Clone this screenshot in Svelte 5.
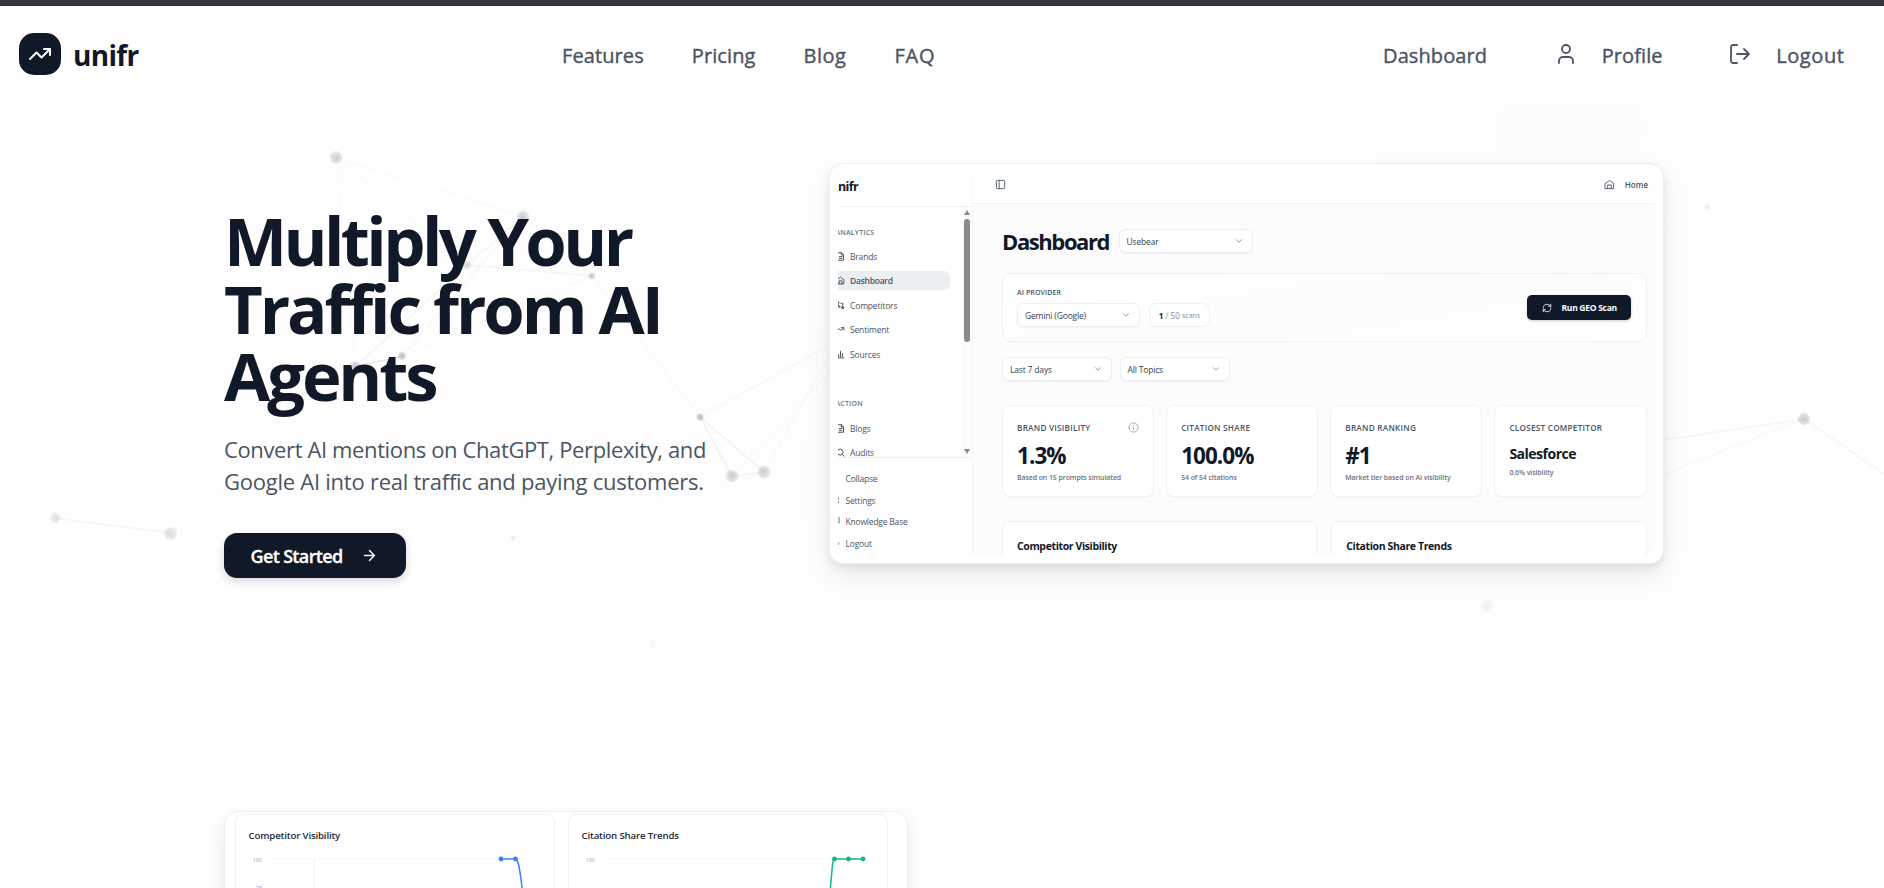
<script lang="ts">
	interface Node {
		x: number;
		y: number;
		r: number;
		o: number;
	}

	const navLinks = ['Features', 'Pricing', 'Blog', 'FAQ'];

	const nodes: Node[] = [
		{ x: 336, y: 157.5, r: 6.8, o: 0.18 },
		{ x: 523, y: 217, r: 6.8, o: 0.18 },
		{ x: 592, y: 276, r: 3.8, o: 0.2 },
		{ x: 467, y: 265, r: 5, o: 0.14 },
		{ x: 402, y: 356, r: 4.5, o: 0.22 },
		{ x: 355, y: 367, r: 6, o: 0.22 },
		{ x: 700, y: 417, r: 4, o: 0.24 },
		{ x: 732, y: 476, r: 6.8, o: 0.18 },
		{ x: 764, y: 472, r: 6.8, o: 0.18 },
		{ x: 55, y: 518, r: 5.8, o: 0.12 },
		{ x: 170.5, y: 533.5, r: 7, o: 0.13 },
		{ x: 513, y: 538, r: 3.2, o: 0.07 },
		{ x: 653, y: 644, r: 5, o: 0.025 },
		{ x: 1487, y: 606, r: 7, o: 0.06 },
		{ x: 1804, y: 419, r: 6.5, o: 0.2 },
		{ x: 1707, y: 207, r: 3.2, o: 0.08 }
	];

	// x1, y1, x2, y2, opacity
	const edges = [
		[336, 157, 523, 217, 0.016],
		[336, 157, 467, 265, 0.016],
		[336, 157, 355, 367, 0.012],
		[336, 157, 402, 356, 0.012],
		[523, 217, 467, 265, 0.03],
		[523, 217, 592, 276, 0.025],
		[467, 265, 592, 276, 0.035],
		[467, 265, 355, 367, 0.035],
		[523, 217, 402, 356, 0.025],
		[402, 356, 355, 367, 0.08],
		[592, 276, 402, 356, 0.014],
		[592, 276, 700, 417, 0.02],
		[700, 417, 732, 476, 0.045],
		[700, 417, 764, 472, 0.045],
		[732, 476, 764, 472, 0.035],
		[700, 417, 830, 345, 0.024],
		[764, 472, 832, 350, 0.016],
		[732, 476, 832, 370, 0.016],
		[55, 518, 170, 533, 0.03],
		[170, 533, 230, 640, 0.008],
		[764, 472, 513, 538, 0.01],
		[513, 538, 430, 640, 0.008],
		[513, 538, 630, 630, 0.008],
		[402, 356, 513, 538, 0.008],
		[732, 476, 660, 630, 0.008],
		[1804, 419, 1664, 440, 0.03],
		[1804, 419, 1664, 474, 0.02],
		[1804, 419, 1884, 474, 0.03],
		[1804, 419, 1707, 207, 0.007]
	];

	const analytics = [
		{ label: 'Brands', icon: 'file' },
		{ label: 'Dashboard', icon: 'home', active: true },
		{ label: 'Competitors', icon: 'compare' },
		{ label: 'Sentiment', icon: 'trend' },
		{ label: 'Sources', icon: 'bars' }
	];
	const actions = [
		{ label: 'Blogs', icon: 'file' },
		{ label: 'Audits', icon: 'search' }
	];
	const footerItems = [
		{ label: 'Collapse', icon: '' },
		{ label: 'Settings', icon: 'M1 5v4M1 14v4' },
		{ label: 'Knowledge Base', icon: 'M0 2h3v14H0' },
		{ label: 'Logout', icon: 'M0 9l3 3-3 3' }
	];

	const stats = [
		{ label: 'BRAND VISIBILITY', value: '1.3%', note: 'Based on 15 prompts simulated', info: true },
		{ label: 'CITATION SHARE', value: '100.0%', note: '54 of 54 citations' },
		{ label: 'BRAND RANKING', value: '#1', note: 'Market tier based on AI visibility' },
		{ label: 'CLOSEST COMPETITOR', value: 'Salesforce', note: '0.6% visibility', small: true }
	];

	const icons: Record<string, string> = {
		file: 'M5 2h10l5 5v15H5zM14 2v6h6M9 12h7M9 17h7',
		home: 'M3 10l9-7 9 7v11H3zM8 21v-8h8v8',
		compare: 'M6 3v12h5M8 12l3 3-3 3M2 5l4-3 3 3M13 6h5v12M15 18a3 3 0 1 0 6 0a3 3 0 1 0-6 0',
		trend: 'M2 15l6-5 5 4 8-7M14 7h7v7',
		bars: 'M3 21h18M7 18v-6M12 18V3M17 18V9',
		search: 'M3 11a8 8 0 1 0 16 0a8 8 0 1 0-16 0M17 17l5 5'
	};
</script>

{#snippet icon(d: string, cls: string)}
	<svg class="icon {cls}" viewBox="0 0 24 24" aria-hidden="true"><path {d} /></svg>
{/snippet}

{#snippet select(text: string, cls: string)}
	<div class="select {cls}">
		<span>{text}</span>
		{@render icon('M6 9l6 6 6-6', 'chevron')}
	</div>
{/snippet}

<div class="page">
	<svg class="network" viewBox="0 0 1884 888" aria-hidden="true">
		<defs>
			<radialGradient id="dot">
				<stop offset="0" stop-color="#111827" />
				<stop offset="0.65" stop-color="#111827" stop-opacity="0.75" />
				<stop offset="1" stop-color="#111827" stop-opacity="0.15" />
			</radialGradient>
		</defs>
		{#each edges as [x1, y1, x2, y2, o]}
			<line {x1} {y1} {x2} {y2} stroke="#111827" stroke-width="2" stroke-opacity={o} />
		{/each}
		{#each nodes as node}
			<circle cx={node.x} cy={node.y} r={node.r} fill="url(#dot)" opacity={node.o} />
		{/each}
	</svg>

	<div class="strip"></div>
	<header>
		<div class="brand">
			<div class="logo">{@render icon('M22 7l-8.5 8.5-5-5L2 17M16 7h6v6', 'logo-icon')}</div>
			<span>unifr</span>
		</div>
		<nav>
			{#each navLinks as link}
				<a href="#{link}">{link}</a>
			{/each}
		</nav>
		<div class="account">
			<a href="#dashboard">Dashboard</a>
			<a href="#profile" class="profile">
				{@render icon('M19 21v-2a4 4 0 0 0-4-4H9a4 4 0 0 0-4 4v2M8 7a4 4 0 1 0 8 0a4 4 0 1 0-8 0', 'nav-icon')}
				<span>Profile</span>
			</a>
			<a href="#logout" class="logout">
				{@render icon('M9 21H5a2 2 0 0 1-2-2V5a2 2 0 0 1 2-2h4M16 17l5-5-5-5M21 12H9', 'nav-icon')}
				<span>Logout</span>
			</a>
		</div>
	</header>

	<section class="hero">
		<div class="copy">
			<h1><span class="tight">Multiply Your</span><br />Traffic from AI<br />Agents</h1>
			<p>
				<span class="tight">Convert AI mentions on ChatGPT, Perplexity, and</span><br />Google AI into real traffic and paying customers.
			</p>
			<button class="cta">
				<span>Get Started</span>
				{@render icon('M5 12h14M12 5l7 7-7 7', 'arrow')}
			</button>
		</div>

		<div class="preview">
			<div class="screen">
				<aside>
					<div class="side-brand">nifr</div>
					<div class="side-scroll">
						<div class="side-nav">
							<div class="group">ANALYTICS</div>
							{#each analytics as item}
								<div class="item" class:active={item.active}>
									{@render icon(icons[item.icon], 'item-icon')}
									<span>{item.label}</span>
								</div>
							{/each}
							<div class="group second">ACTION</div>
							{#each actions as item}
								<div class="item">
									{@render icon(icons[item.icon], 'item-icon')}
									<span>{item.label}</span>
								</div>
							{/each}
						</div>
						<div class="scrollbar">
							<i class="up"></i>
							<i class="thumb"></i>
							<i class="down"></i>
						</div>
					</div>
					<div class="side-footer">
						{#each footerItems as item}
							<div class="foot-item">
								<span class="sliver">
									{#if item.icon}{@render icon(item.icon, 'foot-icon')}{/if}
								</span>
								<span>{item.label}</span>
							</div>
						{/each}
					</div>
				</aside>

				<div class="main">
					<div class="topbar">
						{@render icon('M3 5a2 2 0 0 1 2-2h14a2 2 0 0 1 2 2v14a2 2 0 0 1-2 2H5a2 2 0 0 1-2-2zM9 3v18', 'panel-icon')}
						<div class="home">
							{@render icon(icons.home, 'home-icon')}
							<span>Home</span>
						</div>
					</div>
					<div class="content">
						<div class="title-row">
							<h2>Dashboard</h2>
							{@render select('Usebear', 'brand-select')}
						</div>
						<div class="provider">
							<div>
								<div class="provider-label">AI PROVIDER</div>
								<div class="provider-row">
									{@render select('Gemini (Google)', 'provider-select')}
									<div class="scans"><b>1</b> / 50 <small>scans</small></div>
								</div>
							</div>
							<div class="run">
								{@render icon('M3 12a9 9 0 0 1 9-9 9.7 9.7 0 0 1 6.7 2.7L21 8M21 3v5h-5M21 12a9 9 0 0 1-9 9 9.7 9.7 0 0 1-6.7-2.7L3 16M8 16H3v5', 'run-icon')}
								<span>Run GEO Scan</span>
							</div>
						</div>
						<div class="filters">
							{@render select('Last 7 days', '')}
							{@render select('All Topics', '')}
						</div>
						<div class="stats">
							{#each stats as stat}
								<div class="stat">
									<div class="stat-label">
										<span>{stat.label}</span>
										{#if stat.info}{@render icon('M2 12a10 10 0 1 0 20 0a10 10 0 1 0-20 0M12 16v-4M12 8v.5', 'info')}{/if}
									</div>
									<div class="stat-value" class:small={stat.small}>{stat.value}</div>
									<div class="stat-note">{stat.note}</div>
								</div>
							{/each}
						</div>
						<div class="charts">
							<div class="chart-card">Competitor Visibility</div>
							<div class="chart-card">Citation Share Trends</div>
						</div>
					</div>
				</div>
			</div>
		</div>
	</section>

	<section class="report">
		<div class="report-card">
			<div class="report-title">Competitor Visibility</div>
			<svg class="plot" width="318" height="40" aria-hidden="true">
				<text x="16.5" y="13">100</text>
				<text x="20" y="41">75</text>
				<line x1="34" y1="10" x2="296" y2="10" class="grid dashed" />
				<line x1="78" y1="10" x2="78" y2="40" class="grid" />
				<path d="M265 10H279.5C283 10 284.5 27 286.5 42" stroke="#3b82f6" />
				<circle cx="265" cy="10" r="2.4" fill="#3b82f6" />
				<circle cx="279.5" cy="10" r="2.4" fill="#3b82f6" />
			</svg>
		</div>
		<div class="report-card">
			<div class="report-title">Citation Share Trends</div>
			<svg class="plot" width="318" height="40" aria-hidden="true">
				<text x="16.5" y="13">100</text>
				<line x1="34" y1="10" x2="296" y2="10" class="grid dashed" />
				<path d="M261 42C263 27 263 10 265.5 10H294" stroke="#10b981" />
				<circle cx="265.5" cy="10" r="2.4" fill="#10b981" />
				<circle cx="279.5" cy="10" r="2.4" fill="#10b981" />
				<circle cx="294" cy="10" r="2.4" fill="#10b981" />
			</svg>
		</div>
	</section>
</div>

<style>
	:global(body) {
		background: #fefefe;
		overflow: hidden;
	}

	.page {
		position: relative;
		width: 1884px;
		height: 888px;
		overflow: hidden;
		box-sizing: border-box;
		font-family: 'Open Sans', 'Noto Sans', sans-serif;
		color: #111827;
		background:
			radial-gradient(ellipse 240px 160px at 1570px 130px, rgba(59, 130, 246, 0.01), transparent),
			radial-gradient(ellipse 280px 200px at 940px 480px, rgba(16, 185, 129, 0.016), transparent),
			#fefefe;
	}

	.page * {
		box-sizing: border-box;
	}

	.icon {
		fill: none;
		stroke: currentColor;
		stroke-width: 2;
		stroke-linecap: round;
		stroke-linejoin: round;
		flex-shrink: 0;
		display: block;
	}

	.network {
		position: absolute;
		inset: 0;
		width: 1884px;
		height: 888px;
	}

	.strip {
		height: 6px;
		background: #39373d;
		border-bottom: 1px solid #2d2b31;
	}

	header {
		position: relative;
		display: grid;
		grid-template-columns: 543px 1fr auto;
		align-items: center;
		height: 96px;
		padding: 0 39.5px 0 19px;
		background: #fff;
	}

	.brand {
		display: flex;
		align-items: center;
		gap: 12px;
		font-size: 28px;
		font-weight: 700;
		line-height: 42px;
		letter-spacing: -0.7px;
	}

	.brand span {
		padding-top: 1px;
	}

	.logo {
		display: grid;
		place-items: center;
		width: 42px;
		height: 42px;
		border-radius: 15px;
		background: #111827;
		color: #fff;
	}

	.logo-icon {
		width: 24px;
		height: 24px;
	}

	nav,
	.account {
		display: flex;
		align-items: center;
	}

	nav {
		gap: 48px;
	}

	a {
		color: #4b5563;
		font-size: 20px;
		font-weight: 500;
		line-height: 30px;
		letter-spacing: 0.1px;
		text-decoration: none;
		padding-top: 3px;
		white-space: nowrap;
		-webkit-text-stroke: 0.4px #4b5563;
	}

	nav a:nth-child(n + 3) {
		letter-spacing: 0.5px;
	}

	nav a:last-child {
		letter-spacing: 0.8px;
	}

	.profile,
	.logout {
		display: flex;
		align-items: center;
	}

	.profile {
		margin-left: 67px;
	}

	.profile span {
		margin-left: 23.5px;
	}

	.logout {
		margin-left: 65px;
	}

	.logout span {
		margin-left: 24.5px;
		letter-spacing: 0.6px;
	}

	.nav-icon {
		width: 24px;
		height: 24px;
		margin-top: -3px;
		stroke-width: 1.8;
	}

	.hero {
		position: relative;
		display: grid;
		grid-template-columns: 605px 835px;
		padding: 61px 0 0 224px;
		height: 709px;
	}

	h1 {
		margin: 44px 0 0;
		font-size: 67px;
		line-height: 67.5px;
		font-weight: 700;
		letter-spacing: -3.1px;
		white-space: nowrap;
	}

	h1 .tight {
		letter-spacing: -3.6px;
	}

	p {
		margin: 23px 0 0;
		color: #4b5563;
		font-size: 22px;
		line-height: 32px;
		letter-spacing: -0.25px;
		white-space: nowrap;
	}

	p .tight {
		letter-spacing: -0.38px;
	}

	.cta {
		display: flex;
		align-items: center;
		gap: 18.5px;
		width: 182px;
		height: 45px;
		margin-top: 36px;
		padding: 0 0 0 26.5px;
		border: 0;
		border-radius: 13px;
		background: #111827;
		color: #fff;
		font-family: inherit;
		font-size: 18px;
		font-weight: 600;
		letter-spacing: -0.65px;
		white-space: nowrap;
		-webkit-text-stroke: 0.3px #fff;
		box-shadow: 0 4px 8px rgba(0, 0, 0, 0.14);
	}

	.cta span {
		padding-top: 2px;
	}

	.arrow {
		width: 17px;
		height: 17px;
	}

	.preview {
		height: 401px;
		padding: 8.5px 8px;
		border: 1px solid #eceef0;
		border-radius: 14px;
		background: #fff;
		box-shadow:
			0 14px 30px rgba(0, 0, 0, 0.07),
			0 4px 8px rgba(0, 0, 0, 0.08);
	}

	.screen {
		display: grid;
		grid-template-columns: 134.5px 1fr;
		height: 382px;
		overflow: hidden;
		border-radius: 0 0 8px 0;
	}

	aside {
		display: flex;
		flex-direction: column;
		overflow: hidden;
		border-right: 1px solid #f4f5f6;
		color: #4b5563;
		font-size: 8.5px;
		white-space: nowrap;
	}

	.side-brand {
		height: 34.5px;
		border-bottom: 1px solid #f1f2f4;
		color: #111827;
		font-size: 12.5px;
		font-weight: 700;
		line-height: 28px;
		letter-spacing: -0.6px;
	}

	.side-scroll {
		display: flex;
		height: 251px;
		border-bottom: 1px solid #eceef0;
		overflow: hidden;
	}

	.side-nav {
		width: 124px;
		padding-top: 20px;
	}

	.group {
		height: 12px;
		margin: 0 0 8px -2.5px;
		color: #6b7280;
		font-size: 7px;
		font-weight: 600;
		line-height: 12px;
		letter-spacing: 0.2px;
	}

	.group.second {
		margin-top: 34px;
		margin-bottom: 9px;
	}

	.item {
		display: flex;
		align-items: center;
		gap: 5px;
		width: 112px;
		height: 19px;
		margin-bottom: 5.4px;
		border-radius: 0 6px 6px 0;
		letter-spacing: -0.17px;
	}

	.item.active {
		background: #ebeff2;
		font-weight: 600;
		letter-spacing: -0.25px;
	}

	.item-icon {
		width: 9px;
		height: 9px;
		margin-left: -2px;
		stroke-width: 2.6;
	}

	.scrollbar {
		display: flex;
		flex-direction: column;
		align-items: center;
		width: 10px;
		background: #fcfcfc;
	}

	.up,
	.down {
		border: 3.5px solid transparent;
	}

	.up {
		border-bottom: 5px solid #888;
	}

	.thumb {
		width: 6px;
		height: 124px;
		margin-top: 4px;
		border-radius: 3px;
		background: #8b8b8b;
	}

	.down {
		margin-top: 107px;
		border-top: 5px solid #888;
	}

	.side-footer {
		padding-top: 9.5px;
	}

	.foot-item {
		display: flex;
		align-items: center;
		height: 21.8px;
		letter-spacing: -0.2px;
	}

	.sliver {
		width: 7.5px;
	}

	.foot-icon {
		width: 9px;
		height: 9px;
	}

	.main {
		overflow: hidden;
		background: #fcfcfc;
	}

	.topbar {
		display: flex;
		align-items: center;
		justify-content: space-between;
		height: 31.5px;
		padding: 0 7px 6px 22.5px;
		border-bottom: 1px solid #f1f2f4;
		background: #fff;
		color: #4b5563;
	}

	.panel-icon {
		width: 11px;
		height: 11px;
	}

	.home {
		display: flex;
		align-items: center;
		gap: 10px;
		font-size: 8px;
		font-weight: 600;
	}

	.home-icon {
		width: 11px;
		height: 11px;
	}

	.content {
		padding: 25px 8.5px 0 29.5px;
	}

	.title-row {
		display: flex;
		align-items: center;
		gap: 9.5px;
		height: 24px;
	}

	h2 {
		margin: 0;
		width: 107px;
		font-size: 22px;
		font-weight: 700;
		line-height: 24px;
		letter-spacing: -1.4px;
		white-space: nowrap;
	}

	.select {
		display: flex;
		align-items: center;
		justify-content: space-between;
		width: 110px;
		height: 24px;
		padding: 0 8px 0 7px;
		border: 1px solid #eceef0;
		border-radius: 6px;
		background: #fff;
		box-shadow: 0 1px 1px rgba(0, 0, 0, 0.03);
		color: #374151;
		font-size: 8.5px;
		letter-spacing: -0.17px;
	}

	.brand-select {
		width: 134px;
	}

	.provider-select {
		width: 123px;
	}

	.chevron {
		width: 10px;
		height: 10px;
		color: #7d8490;
	}

	.provider {
		display: flex;
		align-items: flex-start;
		justify-content: space-between;
		height: 69px;
		margin-top: 20px;
		padding: 14px;
		border: 1px solid #eef1f2;
		border-radius: 9px;
		background: linear-gradient(170deg, #fff, #fbfcfc 50%, #fff);
	}

	.provider-label {
		height: 10px;
		margin-bottom: 5px;
		color: #4b5563;
		font-size: 7px;
		font-weight: 600;
		line-height: 10px;
		letter-spacing: 0.12px;
	}

	.provider-row,
	.filters {
		display: flex;
		gap: 9px;
	}

	.scans {
		display: flex;
		align-items: center;
		justify-content: center;
		gap: 2px;
		width: 61px;
		height: 24px;
		border: 1px solid #eef1f2;
		border-radius: 7px;
		background: #fff;
		color: #8b93a0;
		font-size: 8.2px;
	}

	.scans b {
		color: #111827;
	}

	.scans small {
		font-size: 7px;
		color: #8b93a0;
	}

	.run {
		display: flex;
		align-items: center;
		gap: 10px;
		width: 104px;
		height: 25px;
		margin: 7px 0.5px 0 0;
		padding-left: 14.5px;
		border-radius: 5px;
		background: #111827;
		color: #fff;
		font-size: 8.5px;
		font-weight: 700;
		white-space: nowrap;
		letter-spacing: -0.28px;
		box-shadow: 0 1px 3px rgba(0, 0, 0, 0.2);
	}

	.run-icon {
		width: 10px;
		height: 10px;
	}

	.filters {
		gap: 7.5px;
		margin-top: 15px;
	}

	.stats {
		display: grid;
		grid-template-columns: repeat(4, 1fr);
		gap: 12px;
		margin-top: 24px;
	}

	.stat {
		height: 92px;
		padding: 15px 14px;
		border: 1px solid #f1f2f4;
		border-radius: 8px;
		background: #fff;
		box-shadow: 0 1px 1px rgba(0, 0, 0, 0.03);
		white-space: nowrap;
	}

	.stat-label {
		display: flex;
		align-items: center;
		justify-content: space-between;
		height: 12px;
		color: #4b5563;
		font-size: 8.2px;
		font-weight: 600;
		letter-spacing: 0.24px;
	}

	.info {
		width: 11px;
		height: 11px;
		color: #9ca3af;
	}

	.stat-value {
		margin-top: 9px;
		font-size: 22.5px;
		font-weight: 700;
		line-height: 28px;
		letter-spacing: -0.95px;
	}

	.stat-value.small {
		margin-top: 10px;
		font-size: 14px;
		line-height: 22px;
		letter-spacing: -0.5px;
	}

	.stat-note {
		margin-top: 3px;
		color: #6b7280;
		font-size: 7px;
		font-weight: 600;
		line-height: 10px;
		letter-spacing: -0.1px;
	}

	.charts {
		display: grid;
		grid-template-columns: 1fr 1fr;
		gap: 14px;
		margin-top: 24px;
	}

	.chart-card {
		height: 60px;
		padding: 16px 14px;
		border: 1px solid #f1f2f4;
		border-radius: 8px;
		background: #fff;
		font-size: 10.5px;
		font-weight: 700;
		line-height: 16px;
		letter-spacing: -0.38px;
	}

	.report {
		position: relative;
		display: grid;
		grid-template-columns: 320px 320px;
		gap: 13px;
		width: 684px;
		height: 120px;
		margin-left: 224px;
		padding: 2px 0 0 10px;
		border: 1px solid #eceef0;
		border-radius: 14px;
		background: #fff;
		box-shadow: 0 8px 20px rgba(0, 0, 0, 0.09);
	}

	.report-card {
		border: 1px solid #eff2f5;
		border-radius: 8px 8px 0 0;
	}

	.report-title {
		margin: 13px 0 0 12.5px;
		height: 16px;
		color: #1f2937;
		font-size: 9.7px;
		font-weight: 600;
		line-height: 16px;
		letter-spacing: -0.17px;
	}

	.plot {
		display: block;
		margin-top: 5px;
		fill: none;
		stroke-width: 1.5;
	}

	.plot text {
		fill: #9ca3af;
		font-size: 5.5px;
	}

	.grid {
		stroke: #eff1f3;
		stroke-width: 1;
	}

	.dashed {
		stroke-dasharray: 2 2;
	}
</style>
